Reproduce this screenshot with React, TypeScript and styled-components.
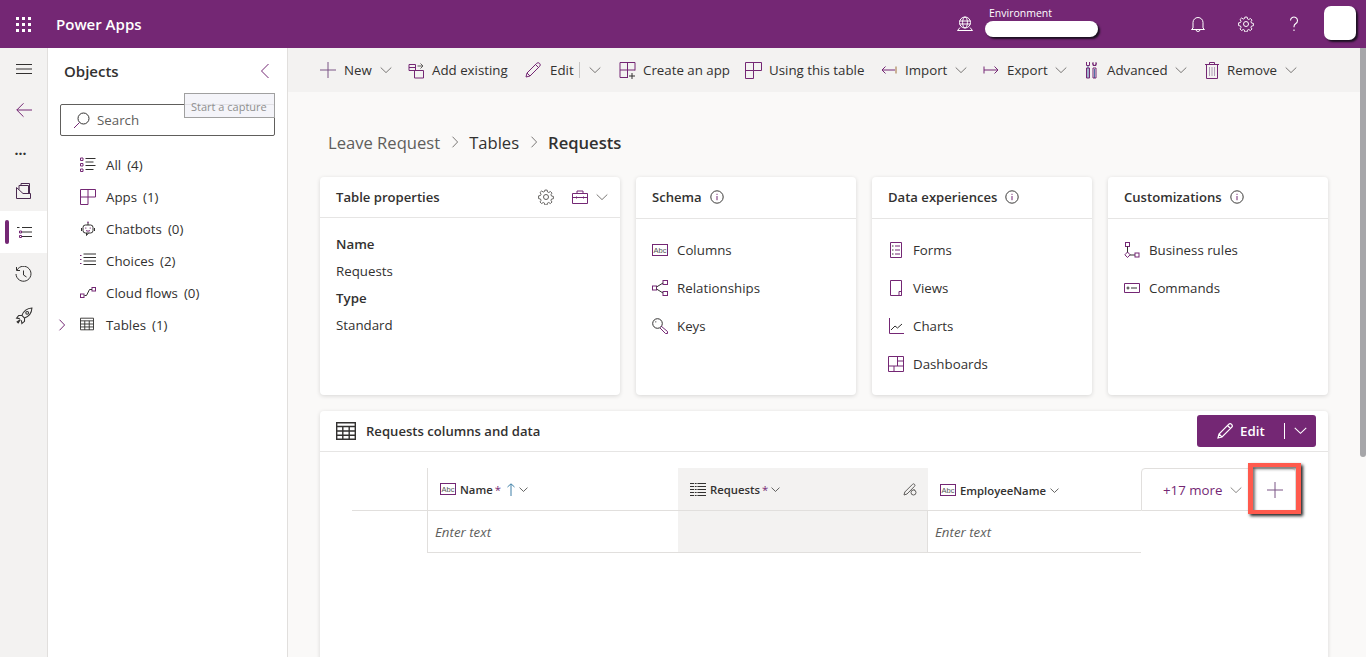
import React from "react";
import styled, { createGlobalStyle } from "styled-components";

const P = "#742774";
const D = "#323130";

const Global = createGlobalStyle`
  html, body { margin: 0; padding: 0; height: 100%; overflow: hidden; }
  body { font-family: "Open Sans", "Noto Sans", "Liberation Sans", sans-serif; color: ${D}; background: #faf9f8; }
  #root { height: 100%; }
  * { box-sizing: border-box; }
`;

const Page = styled.div`display: flex; flex-direction: column; height: 657px; overflow: hidden;`;
const TopBar = styled.header`
  height: 48px; flex: none; background: ${P}; color: #fff; display: flex; align-items: center; padding-left: 16px;
`;
const Waffle = styled.div`
  width: 15px; display: grid; grid-template-columns: repeat(3, 3px); gap: 3px;
  span { width: 3px; height: 3px; background: #fff; }
`;
const Brand = styled.div`margin-left: 25px; font-size: 15px; font-weight: 600; flex: 1;`;
const EnvBlock = styled.div`width: 113px; margin-left: 12px; margin-right: 76px; display: flex; flex-direction: column; align-items: flex-start; margin-top: -6px;`;
const EnvLabel = styled.div`font-size: 10.5px; line-height: 14px; margin-left: 4px; margin-bottom: 1px;`;
const EnvPill = styled.div`width: 113px; height: 16px; border-radius: 8px; background: #fff; box-shadow: 2px 2px 2px #1b1020;`;
const HeadIcon = styled.div`width: 48px; height: 48px; display: flex; align-items: center; justify-content: center;`;
const Avatar = styled.div`width: 32px; height: 34px; margin: -2px 10px 0 6px; background: #fff; border-radius: 7px; box-shadow: 2px 2px 2px #1b1020;`;

const Body = styled.div`flex: 1; display: flex; min-height: 0;`;
const Rail = styled.nav`
  width: 48px; flex: none; background: #f3f2f1; border-right: 1px solid #e1dfdd; display: flex; flex-direction: column;
`;
const RailBtn = styled.div<{ $h: number; $on?: boolean }>`
  height: ${p => p.$h}px; flex: none; display: flex; align-items: center; justify-content: center; position: relative;
  background: ${p => (p.$on ? "#fff" : "transparent")};
`;
const RailMark = styled.span`position: absolute; left: 5px; top: 9px; width: 4px; height: 24px; border-radius: 2px; background: ${P};`;
const Dots = styled.span`font-size: 14px; font-weight: 700; line-height: 10px; margin-left: -6px; margin-top: -1px;`;

const Objects = styled.aside`
  width: 240px; flex: none; background: #fff; border-right: 1px solid #e1dfdd; padding: 0 12px; position: relative;
`;
const ObjectsHead = styled.div`height: 48px; display: flex; align-items: center; justify-content: space-between; padding: 0 1px 2px 4px;`;
const ObjectsTitle = styled.h2`margin: 0; font-size: 15px; font-weight: 600; line-height: 46px;`;
const SearchBox = styled.div`
  height: 32px; margin-top: 8px; border: 1px solid #605e5c; border-radius: 2px; display: flex; align-items: center; gap: 7px; padding-left: 12px;
  font-size: 13.3px; color: #605e5c; width: 215px;
`;
const Capture = styled.div`
  position: absolute; left: 136px; top: 45px; width: 91px; height: 25px; border: 1px solid #a0a0a0; background: rgba(243,243,248,.88);
  font-size: 11px; line-height: 25px; color: #8f8f8f; padding-left: 6px; white-space: nowrap; overflow: hidden;
`;
const Tree = styled.ul`list-style: none; margin: 13px 0 0; padding: 0;`;
const TreeRow = styled.li`height: 32px; display: flex; align-items: center; font-size: 13.3px; position: relative; padding-left: 20px;`;
const TreeIcon = styled.span`width: 16px; height: 16px; display: flex; margin-right: 10px;`;
const TreeCaret = styled.span`position: absolute; left: -4px; top: 10px; display: flex;`;
const TreeCount = styled.span`margin-left: 6px;`;

const Main = styled.main`flex: 1; min-width: 0; display: flex; flex-direction: column;`;
const CmdBar = styled.div`height: 44px; flex: none; background: #f3f2f1; display: flex; align-items: center; padding-left: 32px;`;
const Cmd = styled.div<{ $w: number }>`width: ${p => p.$w}px; flex: none; display: flex; align-items: center; font-size: 13.3px; white-space: nowrap;`;
const CmdIcon = styled.span<{ $w: number }>`width: ${p => p.$w}px; flex: none; display: flex;`;
const CmdLabel = styled.span<{ $w?: number }>`flex: none; ${p => (p.$w ? `width: ${p.$w}px;` : "")}`;
const CmdSep = styled.span`width: 1px; height: 16px; background: #c8c6c4; flex: none; margin-right: 9px;`;

const Scroll = styled.div`flex: 1; min-height: 0; padding: 36px 32px 0; overflow: hidden;`;
const Crumbs = styled.div`height: 30px; margin-bottom: 19px; display: flex; align-items: center; padding: 0 0 2px 8px; font-size: 16.6px;`;
const Crumb = styled.span<{ $first?: boolean; $strong?: boolean }>`
  color: ${p => (p.$first ? "#605e5c" : D)}; font-weight: ${p => (p.$strong ? 600 : 400)}; white-space: nowrap;
`;
const CrumbSep = styled.span`display: flex; margin: 0 8.5px;`;

const Cards = styled.div`display: grid; grid-template-columns: 300px 220px 220px 220px; gap: 16px; height: 218px;`;
const Card = styled.section`background: #fff; border-radius: 4px; box-shadow: 0 1px 4px rgba(0,0,0,.14);`;
const CardHead = styled.div<{ $h?: number }>`
  height: ${p => p.$h ?? 42}px; border-bottom: 1px solid #e6e5e4; display: flex; align-items: center; padding: 0 16px ${p => (p.$h ? 0 : 2)}px; font-size: 13.1px; font-weight: 600; gap: 8px;
`;
const CardHeadTools = styled.div`margin-left: auto; display: flex; align-items: center; margin-right: -4px; gap: 8px;`;
const ToolGap = styled.span`width: 2px;`;
const PropList = styled.dl`margin: 13px 0 0; padding: 0 16px; font-size: 13.3px;`;
const PropName = styled.dt`font-weight: 600; line-height: 27px;`;
const PropValue = styled.dd`margin: 0; line-height: 27px;`;
const LinkList = styled.div`padding-top: 12px;`;
const LinkRow = styled.div`height: 38px; padding-left: 16px; display: flex; align-items: center; font-size: 13.3px; gap: 9px;`;
const LinkIcon = styled.span`width: 16px; height: 16px; display: flex; align-items: center;`;

const DataPanel = styled.section`margin-top: 16px; background: #fff; border-radius: 4px 4px 0 0; box-shadow: 0 1px 4px rgba(0,0,0,.14); height: 400px;`;
const DataHead = styled.div`height: 41px; border-bottom: 1px solid #e6e5e4; display: flex; align-items: center; padding: 0 12px 0 16px; font-size: 13.1px; font-weight: 600; gap: 10px;`;
const EditBtn = styled.div`
  margin-left: auto; width: 119px; height: 32px; margin-top: -1px; background: ${P}; color: #fff; border-radius: 3px; display: flex; align-items: center; padding-left: 20px; font-weight: 600; font-size: 13.3px;
`;
const EditLabel = styled.span`margin-left: 7px; width: 44px;`;
const EditSep = styled.span`width: 1px; height: 16px; background: #fff; margin-right: 9px;`;

const Sheet = styled.div`
  margin: 16px 0 0 32px; display: grid; grid-template-columns: 75px 251px 250px 213px 155px; grid-template-rows: 43px 42px;
`;
const Spacer = styled.div`border-bottom: 1px solid #e1dfdd;`;
const HeadCell = styled.div<{ $first?: boolean; $grey?: boolean }>`
  display: flex; align-items: center; border-bottom: 1px solid #e1dfdd; padding: ${p => (p.$first || p.$grey ? 0 : 2)}px 0 0 12px; font-size: 11.3px; font-weight: 600; white-space: nowrap;
  border-left: ${p => (p.$first ? "1px solid #e1dfdd" : "0")};
  background: ${p => (p.$grey ? "#f3f2f1" : "#fff")};
`;
const HeadText = styled.span`margin-left: 4px;`;
const Req = styled.span`color: ${P}; margin-left: 2px; font-weight: 400;`;
const SortMark = styled.span<{ $l: number }>`display: flex; margin-left: ${p => p.$l}px;`;
const CellEnd = styled.span`margin-left: auto; margin-right: 11px; display: flex;`;
const MoreCell = styled.div`
  position: relative; display: flex; align-items: center; border: 1px solid #e1dfdd; border-radius: 4px 4px 0 0;
  padding: 1px 0 0 21px; font-size: 13.3px; color: ${P}; white-space: nowrap;
`;
const MoreLabel = styled.span`width: 67px;`;
const PlusWrap = styled.span`margin-left: 25px; display: flex;`;
const Highlight = styled.div`
  position: absolute; left: 106px; top: -6px; width: 53px; height: 51px; border: solid #ff5a4d; border-width: 4px 5px 4px 5px;
  box-shadow: 2px 2px 3px #222, inset 2px 2px 3px rgba(0,0,0,.55);
`;
const DataCell = styled.div<{ $first?: boolean; $grey?: boolean }>`
  display: flex; align-items: center; border-bottom: 1px solid #e1dfdd; padding-left: 7px; font-size: 13.3px; font-style: italic; color: #605e5c;
  border-left: ${p => (p.$first ? "1px solid #e1dfdd" : "0")};
  border-right: ${p => (p.$grey ? "1px solid #e1dfdd" : "0")};
  background: ${p => (p.$grey ? "#f3f2f1" : "#fff")};
`;
const Blank = styled.div``;

const Track = styled.div`width: 6px; flex: none; background: #faf9f8;`;
const Thumb = styled.div`height: 409px; background: #a6a6a9; border-radius: 0 0 3px 3px;`;

type IP = { s?: number; h?: number; c?: string; vb?: string; children: React.ReactNode; w?: number };
const I = ({ s = 16, h, c = P, vb = "0 0 16 16", w = 1, children }: IP) => (
  <svg width={s} height={h ?? s} viewBox={vb} fill="none" stroke={c} strokeWidth={w} style={{ display: "block", flex: "none" }}>{children}</svg>
);

const Chev = ({ c = "#7a7876", s = 12 }: { c?: string; s?: number }) => (
  <I s={s} c={c} vb="0 0 12 12"><path d="M.7 3.5 6 8.6l5.3-5.1" /></I>
);
const ChevRight = ({ c = "#7a7876", s = 12 }: { c?: string; s?: number }) => (
  <I s={s} c={c} vb="0 0 12 12"><path d="M3.5.7 8.600 6l-5.100 5.300" /></I>
);
const Plus = ({ c = "#7a5585" }: { c?: string }) => (
  <I c={c}><path d="M0 8h16M8 0v16" /></I>
);
const Pencil = ({ c = P, s = 16, w = 1 }: { c?: string; s?: number; w?: number }) => (
  <I c={c} s={s} w={w}><path d="M1 15l1-4L11.600 1.400a1.900 1.900 0 0 1 3 3L5 14zM2 11l3 3M10.500 2.500l3 3" /></I>
);
const Gear = ({ c = "#fff", s = 16 }: { c?: string; s?: number }) => (
  <I c={c} s={s}>
    <circle cx="8" cy="8" r="2.500" />
    <path d="M6.800.700h2.400l.4 2 1.300.6 1.800-1.100 1.600 1.700-1.100 1.700.6 1.400 2 .4v2.400l-2 .4-.6 1.300 1.100 1.800-1.700 1.600-1.700-1.100-1.400.6-.4 2H6.800l-.4-2-1.300-.6-1.800 1.100-1.600-1.700 1.100-1.700-.6-1.400-2-.4V6.800l2-.4.6-1.300-1.100-1.800 1.700-1.600 1.700 1.100 1.400-.6z" transform="translate(.4 .4) scale(.95)" />
  </I>
);
const Abc = () => (
  <svg width="16" height="12" viewBox="0 0 16 12" style={{ display: "block", flex: "none" }}>
    <rect x=".5" y=".5" width="15" height="11" fill="#fff" stroke={P} />
    <text x="8" y="8.600" textAnchor="middle" fontSize="7.500" fontWeight="400" fontFamily="'Liberation Sans', sans-serif" fill="#555">Abc</text>
  </svg>
);
const Info = () => (
  <I s={14} c="#3b3a39" vb="0 0 14 14">
    <circle cx="7" cy="7" r="6.200" />
    <path d="M7 6v4.200" stroke={P} /><path d="M7 3.800v1.100" stroke={P} />
  </I>
);
const TableIco = ({ s = 16, c = D }: { s?: number; c?: string }) => (
  <I s={s} h={s === 20 ? 18 : 14} vb="0 0 20 18" c={c} w={s === 20 ? 1.400 : 1.300}>
    <path d="M.7.700h18.600v16.600H.7zM.7 4.500h18.600M.7 9h18.600M.7 13.200h18.600M6.800 4.500v13M13.200 4.500v13" />
  </I>
);
const AppsIco = () => (
  <I c={P}><path d="M.5.500h15v7.500H8v7.500H.5zM8 .5V8M.5 8H8" /></I>
);
const Bot = () => (
  <I>
    <rect x="3" y="4" width="10" height="8" rx="2.400" stroke={D} />
    <path d="M8 1.500V4M1.500 7v3M14.500 7v3M6.500 12v2.500L8.500 12" stroke={D} />
    <circle cx="8" cy="1.200" r=".8" fill={P} stroke="none" />
    <path d="M5.800 6.500v1.200M10.200 6.500v1.200M6 9.600q2 1.200 4 0" />
  </I>
);
const TextCol = () => (
  <svg width="16" height="14" viewBox="0 0 16 14" style={{ display: "block", flex: "none" }} fill="none" stroke={D}>
    <path d="M0 1.500h16M0 4.500h16M0 7.500h16M0 10.500h16M0 13.500h16" />
    <path d="M4.500 0v14M7 0v14" stroke="#f3f2f1" strokeWidth=".8" />
  </svg>
);

const cmds = [
  { w: 88, iw: 24, lw: 36, chev: true, label: "New", icon: <Plus /> },
  { w: 117, iw: 24, label: "Add existing", icon: <I s={17} vb="0 0 17 17"><path d="M6.500 8.500h9v7.500h-9zM1 2.500h6.500v6H1z" /><path d="M1 5.500h6.500" /><path d="M9.500 4h5M12.500 1.500l2.500 2.500-2.500 2.500" stroke="#605e5c" /></I> },
  { w: 64, iw: 25, lw: 29, label: "Edit", icon: <Pencil />, sep: true },
  { w: 30, iw: 0, chev: true, label: "", icon: null },
  { w: 126, iw: 24, label: "Create an app", icon: <I s={17} vb="0 0 17 17"><path d="M1 .5h15v8M1 .5v15h8M8.500.5v15M1 8h15" /><path d="M13 11v6M10 14h6" stroke={D} /></I> },
  { w: 136, iw: 24, label: "Using this table", icon: <I s={17} vb="0 0 17 17"><path d="M.5.500h16v8h-8v8h-8zM8.500.5v8M.5 8.500h8" /></I> },
  { w: 102, iw: 24, lw: 50, chev: true, label: "Import", icon: <I><path d="M15 4.500v7" stroke="#a0703c" /><path d="M14 8H1M4.500 4.500 1 8l3.500 3.500" /></I> },
  { w: 102, iw: 24, lw: 48, chev: true, label: "Export", icon: <I><path d="M1 4.500v7M1 8h14M11.500 4.500 15 8l-3.500 3.500" /></I> },
  { w: 120, iw: 22, lw: 68, chev: true, label: "Advanced", icon: <I s={14} h={18} vb="0 0 14 18"><path d="M3 4v13M9.500 8v9" stroke="#4f6fa8" /><path d="M1.500 1v3.500h3V1M8 1.500a1.800 1.800 0 1 0 3 0v3H8zM4.500 7H1.500v10h3zM11 7H8v10h3z" /></I> },
  { w: 110, iw: 22, lw: 58, chev: true, label: "Remove", icon: <I s={14} h={18} vb="0 0 14 18"><path d="M0 3.500h14M4.500 3.500v-2h5v2M1.500 3.500h11v14h-11z" /><path d="M4.500 6v9M7 6v9M9.500 6v9" stroke="#b0a0b8" /></I> },
];

const schema = [
  { label: "Columns", icon: <Abc /> },
  { label: "Relationships", icon: <I><rect x=".5" y="6" width="4" height="4" /><rect x="11" y=".5" width="4.500" height="4" /><rect x="11" y="11.500" width="4.500" height="4" /><path d="M4.500 7 11 3M4.500 9l6.500 4" stroke={D} /></I> },
  { label: "Keys", icon: <I s={16}><circle cx="5.500" cy="5.500" r="4.800" stroke={D} /><path d="M9 8l6.500 5.500v2h-2L8 10" /><circle cx="3.800" cy="3.800" r=".6" fill={D} stroke="none" /></I> },
];
const experiences = [
  { label: "Forms", icon: <I><path d="M2.500.5h11v15h-11zM7 4h5M7 8h5M7 12h5" /><path d="M4 4h1.500M4 8h1.500M4 12h1.500" stroke={D} /></I> },
  { label: "Views", icon: <I><path d="M2.500.5h11v15h-11zM11 15.500v-4h2.500v4" /></I> },
  { label: "Charts", icon: <I><path d="M1.500 0v15.500H16" /><path d="M3 12l4-4 2.500 2L14 6" stroke={D} /></I> },
  { label: "Dashboards", icon: <I><path d="M.5.500h15v15H.5zM.5 10h15M9.500.5V10M9.500 5h6M6 10v5.500" /></I> },
];
const customs = [
  { label: "Business rules", icon: <I><rect x="1.500" y=".5" width="4" height="4" /><path d="M3.500 4.500v6" stroke={D} /><path d="M3.500 10l2.600 2.800-2.600 2.700L.9 12.800z" /><path d="M6 13h5" stroke={D} /><rect x="11" y="11" width="4" height="4" /></I> },
  { label: "Commands", icon: <I><path d="M.5 3.500h15v9H.5z" /><circle cx="4" cy="8" r="1" stroke={D} /><path d="M7 8h6" stroke={D} /></I> },
];

const CardTitleInfo = ({ t }: { t: string }) => (<CardHead>{t}<Info /></CardHead>);
const Links = ({ items }: { items: { label: string; icon: React.ReactNode }[] }) => (
  <LinkList>{items.map(i => <LinkRow key={i.label}><LinkIcon>{i.icon}</LinkIcon>{i.label}</LinkRow>)}</LinkList>
);

export default function App() {
  return (
    <Page>
      <Global />
      <TopBar>
        <Waffle>{Array.from({ length: 9 }).map((_, i) => <span key={i} />)}</Waffle>
        <Brand>Power Apps</Brand>
        <I c="#fff"><circle cx="8" cy="6.500" r="5.500" /><ellipse cx="8" cy="6.500" rx="2.400" ry="5.500" /><path d="M2.500 5h11M2.500 8h11M.5 14.500h15l-2.500-3M.5 14.500l2.500-3" /></I>
        <EnvBlock>
          <EnvLabel>Environment</EnvLabel>
          <EnvPill />
        </EnvBlock>
        <HeadIcon><I c="#fff"><path d="M3 12V6.500a5 5 0 0 1 10 0V12l1.500 1.500h-13zM6 13.500a2 2 0 0 0 4 0" /></I></HeadIcon>
        <HeadIcon><Gear /></HeadIcon>
        <HeadIcon><I c="#fff" w={1.100}><path d="M4.500 4.500a3.500 3.500 0 1 1 5.300 3c-1.200.8-1.800 1.400-1.800 3v.8" /><path d="M8 13.600v1.400" /></I></HeadIcon>
        <Avatar />
      </TopBar>
      <Body>
        <Rail>
          <RailBtn $h={42}><I c={D}><path d="M0 3.500h16M0 8h16M0 12.500h16" /></I></RailBtn>
          <RailBtn $h={40}><I><path d="M16 8H.8M7.500 1.300.8 8l6.700 6.700" /></I></RailBtn>
          <RailBtn $h={40}><Dots>...</Dots></RailBtn>
          <RailBtn $h={41}><I s={15} h={16} vb="0 0 15 16" c="#4a2a50"><path d="M.5 4.500v11h14v-5H7zM3 6.500V2.500h9.500v8M5 2.500v-2h8.500v10" /></I></RailBtn>
          <RailBtn $h={42} $on>
            <RailMark />
            <I c={D}><path d="M1 3.500h2.500M6 3.500h10M6 8h10M6 12.500h10" /><path d="M3.500 7h2v2h-2zM3.500 11.500h2v2h-2z" stroke={P} /></I>
          </RailBtn>
          <RailBtn $h={42}><I s={17} vb="0 0 17 17" c={D}><path d="M2 4a7.500 7.500 0 1 1-1 4M1.500 1v3.500H5M8.500 4.500V9l3 2" /></I></RailBtn>
          <RailBtn $h={42}><I s={18} vb="0 0 17 17" c={D}><path d="M16 1c-5 .3-8 3-9.500 7l2.500 2.500c4-1.500 6.700-4.500 7-9.500zM6.500 8H3.500L1.500 10.500l3 .5M9 10.500V13.500l-2.500 2-.5-3M5 12l-2 3-1-1z" /><circle cx="11.500" cy="5.500" r="1.300" /></I></RailBtn>
        </Rail>
        <Objects>
          <ObjectsHead>
            <ObjectsTitle>Objects</ObjectsTitle>
            <I><path d="M10.500 1 3.500 8l7 7" /></I>
          </ObjectsHead>
          <SearchBox>
            <I s={17} vb="0 0 17 17"><circle cx="10.500" cy="6.500" r="5.500" stroke={D} /><path d="M6.500 10.500 1 16" /></I>
            Search
          </SearchBox>
          <Capture>Start a capture</Capture>
          <Tree>
            <TreeRow><TreeIcon><I><path d="M.5 1h2.500v2.500H.5zM.5 6.500h2.500V9H.5zM.5 12h2.500v2.500H.5z" /><path d="M5.500 1.500H15.500M5.500 5h8M5.500 8.500h10M5.500 12.500h8" stroke={D} /></I></TreeIcon>All<TreeCount>(4)</TreeCount></TreeRow>
            <TreeRow><TreeIcon><AppsIco /></TreeIcon>Apps<TreeCount>(1)</TreeCount></TreeRow>
            <TreeRow><TreeIcon><Bot /></TreeIcon>Chatbots<TreeCount>(0)</TreeCount></TreeRow>
            <TreeRow><TreeIcon><I><path d="M0 2.500h1.500M0 6.500h1.500M0 10.500h1.500" /><path d="M3.500 1h12.500M3.500 4.500h12.500M3.500 8h12.500M3.500 11.500h12.500" stroke={D} /></I></TreeIcon>Choices<TreeCount>(2)</TreeCount></TreeRow>
            <TreeRow><TreeIcon><I><rect x=".5" y="9" width="3.500" height="3.500" /><rect x="12" y="2.500" width="3.500" height="3.500" /><path d="M4.500 10.500h2L9.500 4.500H12" stroke={D} /></I></TreeIcon>Cloud flows<TreeCount>(0)</TreeCount></TreeRow>
            <TreeRow>
              <TreeCaret><ChevRight c={P} /></TreeCaret>
              <TreeIcon><TableIco s={14} /></TreeIcon>Tables<TreeCount>(1)</TreeCount>
            </TreeRow>
          </Tree>
        </Objects>
        <Main>
          <CmdBar>
            {cmds.map((c, i) => (
              <Cmd key={i} $w={c.w}>
                {c.icon && <CmdIcon $w={c.iw}>{c.icon}</CmdIcon>}
                {c.label && <CmdLabel $w={c.lw}>{c.label}</CmdLabel>}
                {c.sep && <CmdSep />}
                {c.chev && <Chev />}
              </Cmd>
            ))}
          </CmdBar>
          <Scroll>
            <Crumbs>
              <Crumb $first>Leave Request</Crumb>
              <CrumbSep><ChevRight /></CrumbSep>
              <Crumb>Tables</Crumb>
              <CrumbSep><ChevRight /></CrumbSep>
              <Crumb $strong>Requests</Crumb>
            </Crumbs>
            <Cards>
              <Card>
                <CardHead $h={41}>
                  Table properties
                  <CardHeadTools>
                    <Gear c="#605e5c" />
                    <ToolGap />
                    <I><path d="M.5 4.500h15v10H.5zM5 4.500V2h6v2.500M.5 8.500h15M4.500 7.500v2M11.500 7.500v2" /></I>
                    <Chev />
                  </CardHeadTools>
                </CardHead>
                <PropList>
                  <PropName>Name</PropName>
                  <PropValue>Requests</PropValue>
                  <PropName>Type</PropName>
                  <PropValue>Standard</PropValue>
                </PropList>
              </Card>
              <Card><CardTitleInfo t="Schema" /><Links items={schema} /></Card>
              <Card><CardTitleInfo t="Data experiences" /><Links items={experiences} /></Card>
              <Card><CardTitleInfo t="Customizations" /><Links items={customs} /></Card>
            </Cards>
            <DataPanel>
              <DataHead>
                <TableIco s={20} />
                Requests columns and data
                <EditBtn>
                  <Pencil c="#fff" w={1.200} />
                  <EditLabel>Edit</EditLabel>
                  <EditSep />
                  <Chev c="#fff" s={13} />
                </EditBtn>
              </DataHead>
              <Sheet>
                <Spacer />
                <HeadCell $first>
                  <Abc /><HeadText>Name</HeadText><Req>*</Req>
                  <SortMark $l={5}><I s={10} h={13} vb="0 0 10 13" c="#3f7fa6"><path d="M5 13V1M1.500 4 5 .8 8.500 4" /></I></SortMark>
                  <SortMark $l={3}><Chev c={D} s={9} /></SortMark>
                </HeadCell>
                <HeadCell $grey>
                  <TextCol /><HeadText>Requests</HeadText><Req>*</Req>
                  <SortMark $l={3}><Chev c={D} s={9} /></SortMark>
                  <CellEnd><I s={14} vb="0 0 14 14" c="#605e5c"><path d="M1 13l.8-3L9.500 2.300a1.400 1.400 0 0 1 2 2L4 12zM11 7v1" /><circle cx="10.500" cy="10.500" r="2.500" /></I></CellEnd>
                </HeadCell>
                <HeadCell>
                  <Abc /><HeadText>EmployeeName</HeadText>
                  <SortMark $l={4}><Chev c={D} s={9} /></SortMark>
                </HeadCell>
                <MoreCell>
                  <MoreLabel>+17 more</MoreLabel>
                  <Chev c="#8a8886" />
                  <PlusWrap><Plus /></PlusWrap>
                  <Highlight />
                </MoreCell>
                <Blank />
                <DataCell $first>Enter text</DataCell>
                <DataCell $grey />
                <DataCell>Enter text</DataCell>
                <Blank />
              </Sheet>
            </DataPanel>
          </Scroll>
        </Main>
        <Track><Thumb /></Track>
      </Body>
    </Page>
  );
}
